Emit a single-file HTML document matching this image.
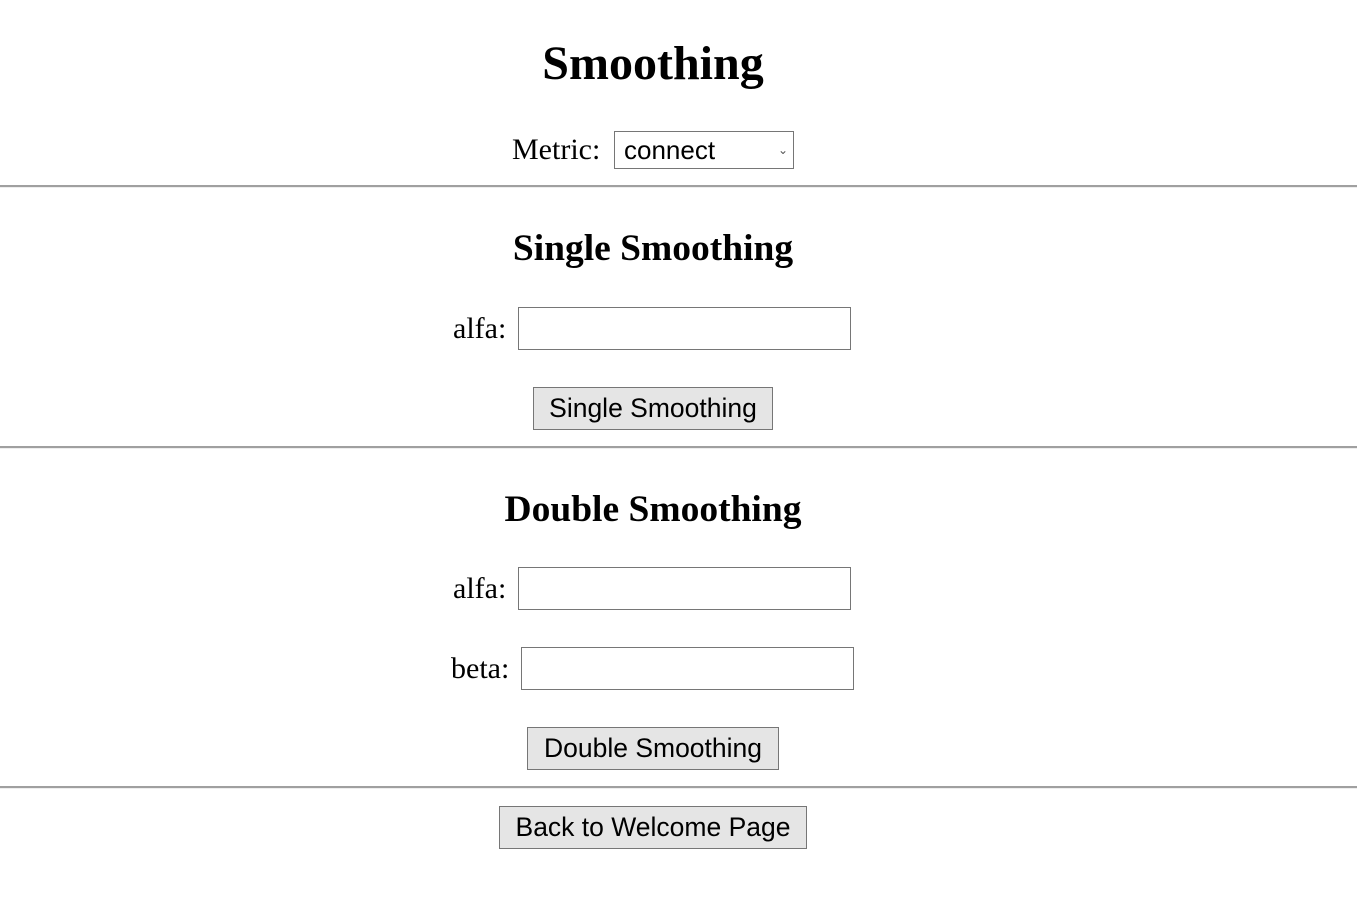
<!DOCTYPE html>
<html><head><style>
body{margin:0;width:1357px;height:915px;background:#fff;position:relative;font-family:"Liberation Serif",serif;color:#000;overflow:hidden}
.c{position:absolute;left:0;width:1306px;text-align:center;white-space:nowrap}
.a{position:absolute;white-space:nowrap}
h1,h2{margin:0;font-weight:bold}
.lbl{font-size:30px;line-height:32px}
.inp{position:absolute;box-sizing:border-box;border:1px solid #767676;background:#fff;height:43px;width:333px}
.btn{position:absolute;box-sizing:border-box;border:1px solid #767676;background:#e5e5e5;height:43px;font-family:"Liberation Sans",sans-serif;font-size:26.5px;text-align:center;line-height:40px}
.hr{position:absolute;left:0;width:1357px;height:2px;background:#a0a0a0;border-bottom:1px solid #eee}
</style></head><body>
<div class="c" style="top:34px"><h1 style="font-size:48px;line-height:60px">Smoothing</h1></div>
<div class="a lbl" style="left:512px;top:134px">Metric:</div>
<div class="a" style="left:614px;top:131px;width:180px;height:38px;box-sizing:border-box;border:1px solid #767676;font-family:'Liberation Sans',sans-serif;font-size:26px;line-height:36px;padding-left:9px">connect<span style="position:absolute;right:5px;top:0;font-size:12px;color:#555">&#8964;</span></div>
<div class="hr" style="top:185px"></div>
<div class="c" style="top:227px"><h2 style="font-size:37.5px;line-height:44px">Single Smoothing</h2></div>
<div class="a lbl" style="left:453px;top:313px">alfa:</div>
<div class="inp" style="left:518px;top:307px"></div>
<div class="btn" style="left:533px;top:387px;width:240px">Single Smoothing</div>
<div class="hr" style="top:446px"></div>
<div class="c" style="top:488px"><h2 style="font-size:37.5px;line-height:44px">Double Smoothing</h2></div>
<div class="a lbl" style="left:453px;top:573px">alfa:</div>
<div class="inp" style="left:518px;top:567px"></div>
<div class="a lbl" style="left:451px;top:653px">beta:</div>
<div class="inp" style="left:521px;top:647px"></div>
<div class="btn" style="left:527px;top:727px;width:252px">Double Smoothing</div>
<div class="hr" style="top:786px"></div>
<div class="btn" style="left:499px;top:806px;width:308px">Back to Welcome Page</div>
</body></html>
